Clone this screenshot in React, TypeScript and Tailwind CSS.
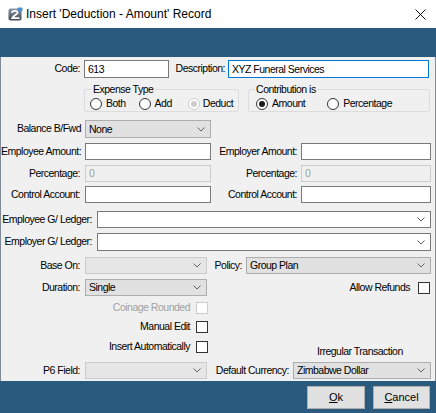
import React from "react"

const font = { fontFamily: '"Liberation Sans", Arial, sans-serif' }

function Chevron() {
  return (
    <svg width="8" height="5" viewBox="0 0 8 5" className="shrink-0">
      <polyline points="0.5,0.5 4,4 7.5,0.5" fill="none" stroke="#606060" strokeWidth="1" />
    </svg>
  )
}

function TextBox({ w, value = "", disabled = false, focused = false }: { w: string; value?: string; disabled?: boolean; focused?: boolean }) {
  const cls = disabled
    ? "bg-[#f0f0f0] border-[#cccccc] text-[#a0a0a0]"
    : focused
      ? "bg-white border-[#0078d7] text-black"
      : "bg-white border-[#7a7a7a] text-black"
  return <div className={`${w} h-full border ${cls} flex items-center pl-[3px] leading-none whitespace-nowrap`}>{value}</div>
}

function Combo({ w, value = "", kind = "list" }: { w: string; value?: string; kind?: "list" | "edit" | "disabled" }) {
  const cls =
    kind === "edit"
      ? "bg-white border-[#7a7a7a]"
      : kind === "disabled"
        ? "bg-[#e6e6e6] border-[#cccccc]"
        : "bg-[#e1e1e1] border-[#adadad]"
  return (
    <div className={`${w} h-full border ${cls} flex items-center justify-between pl-[3px] pr-[5px] leading-none text-black whitespace-nowrap`}>
      <span>{value}</span>
      <Chevron />
    </div>
  )
}

function Radio({ label, checked = false, disabled = false, gap = "ml-[4px]" }: { label: string; checked?: boolean; disabled?: boolean; gap?: string }) {
  const ring = disabled ? "border-[#cccccc]" : "border-[#333333]"
  const dot = disabled ? "bg-[#cccccc]" : "bg-[#1a1a1a]"
  return (
    <div className="flex items-center">
      <div className={`w-[12px] h-[12px] rounded-full border ${ring} bg-white flex items-center justify-center`}>
        {checked && <div className={`w-[6px] h-[6px] rounded-full ${dot}`} />}
      </div>
      <span className={`${gap} whitespace-nowrap`}>{label}</span>
    </div>
  )
}

function Check({ disabled = false }: { disabled?: boolean }) {
  return <div className={`w-[12px] h-[12px] border bg-white ${disabled ? "border-[#cccccc]" : "border-[#333333]"}`} />
}

function AppIcon() {
  return (
    <svg width="15" height="15" viewBox="0 0 15 15">
      <defs>
        <linearGradient id="ig" x1="0" y1="0" x2="0" y2="1">
          <stop offset="0" stopColor="#8a96a3" />
          <stop offset="1" stopColor="#3e4a57" />
        </linearGradient>
      </defs>
      <rect x="0.5" y="1.5" width="13" height="12" rx="2" fill="url(#ig)" />
      <path d="M4 5.2 C4.5 3.4 9.8 3.2 9.6 5.6 C9.4 7.6 5 8.4 4.2 11.2 L10.8 11.2" fill="none" stroke="#ffffff" strokeWidth="1.8" strokeLinecap="round" />
      <rect x="9.5" y="0.5" width="5" height="4" rx="1" fill="#4c8fd1" />
    </svg>
  )
}

function Label({ w, children, muted = false }: { w: string; children: React.ReactNode; muted?: boolean }) {
  return <div className={`${w} shrink-0 text-right whitespace-nowrap ${muted ? "text-[#a0a0a0]" : ""}`}>{children}</div>
}

export default function App() {
  return (
    <div
      className="w-[436px] h-[413px] overflow-hidden flex flex-col text-[10.5px] tracking-[-0.5px] text-black bg-[#f0f0f0]"
      style={font}
    >
      {/* Title bar */}
      <div className="h-[28px] bg-white flex items-center shrink-0 tracking-normal">
        <div className="ml-[8px] mt-[1px]">
          <AppIcon />
        </div>
        <span className="ml-[3px] text-[12px] text-black">Insert 'Deduction - Amount' Record</span>
        <svg width="11" height="11" viewBox="0 0 11 11" className="ml-auto mr-[10px]">
          <path d="M0.5 0.5 L10.5 10.5 M10.5 0.5 L0.5 10.5" stroke="#111" strokeWidth="1" />
        </svg>
      </div>

      {/* Top band */}
      <div className="h-[29px] bg-[#2a5a7e] shrink-0" />

      {/* Form */}
      <div className="h-[324px] shrink-0 border-x border-[#7f8a94] bg-[#f0f0f0] flex flex-col">
        {/* Code / Description */}
        <div className="flex items-center h-[18px] mt-[3px]">
          <Label w="w-[79px]">Code:</Label>
          <div className="ml-[4px] h-full flex">
            <TextBox w="w-[85px]" value="613" />
          </div>
          <Label w="w-[56px]">Description:</Label>
          <div className="ml-[3px] h-full flex">
            <TextBox w="w-[201px]" value="XYZ Funeral Services" focused />
          </div>
        </div>

        {/* Group boxes */}
        <div className="flex mt-[6px] h-[28px]">
          <fieldset className="ml-[83px] w-[155px] h-[28px] border border-[#dcdcdc] rounded-[2px] px-[5px]">
            <legend className="px-[2px] leading-[11px] ml-[1px]">Expense Type</legend>
            <div className="flex items-center mt-[1px]">
              <Radio label="Both" />
              <div className="ml-[13px]">
                <Radio label="Add" />
              </div>
              <div className="ml-[16px]">
                <Radio label="Deduct" checked disabled gap="ml-[3px]" />
              </div>
            </div>
          </fieldset>
          <fieldset className="ml-[9px] w-[182px] h-[28px] border border-[#dcdcdc] rounded-[2px] px-[7px]">
            <legend className="px-[1px] leading-[11px] ml-[-1px]">Contribution is</legend>
            <div className="flex items-center mt-[1px]">
              <Radio label="Amount" checked />
              <div className="ml-[22px]">
                <Radio label="Percentage" />
              </div>
            </div>
          </fieldset>
        </div>

        {/* Balance */}
        <div className="flex items-center h-[18px] mt-[8px]">
          <Label w="w-[80px]">Balance B/Fwd</Label>
          <div className="ml-[4px] h-full flex">
            <Combo w="w-[126px]" value="None" />
          </div>
        </div>

        {/* Amounts */}
        <div className="flex items-center h-[17px] mt-[5px]">
          <Label w="w-[79px]">Employee Amount:</Label>
          <div className="ml-[5px] h-full flex">
            <TextBox w="w-[126px]" />
          </div>
          <Label w="w-[86px]">Employer Amount:</Label>
          <div className="ml-[4px] h-full flex">
            <TextBox w="w-[130px]" />
          </div>
        </div>

        <div className="flex items-center h-[17px] mt-[5px]">
          <Label w="w-[79px]">Percentage:</Label>
          <div className="ml-[5px] h-full flex">
            <TextBox w="w-[126px]" value="0" disabled />
          </div>
          <Label w="w-[86px]">Percentage:</Label>
          <div className="ml-[4px] h-full flex">
            <TextBox w="w-[130px]" value="0" disabled />
          </div>
        </div>

        <div className="flex items-center h-[17px] mt-[4px]">
          <Label w="w-[79px]">Control Account:</Label>
          <div className="ml-[5px] h-full flex">
            <TextBox w="w-[126px]" />
          </div>
          <Label w="w-[86px]">Control Account:</Label>
          <div className="ml-[4px] h-full flex">
            <TextBox w="w-[130px]" />
          </div>
        </div>

        {/* Ledgers */}
        <div className="flex items-center h-[17px] mt-[8px]">
          <Label w="w-[91px]">Employee G/ Ledger:</Label>
          <div className="ml-[5px] h-full flex">
            <Combo w="w-[334px]" kind="edit" />
          </div>
        </div>
        <div className="flex items-center h-[18px] mt-[5px]">
          <Label w="w-[91px]">Employer G/ Ledger:</Label>
          <div className="ml-[5px] h-full flex">
            <Combo w="w-[334px]" kind="edit" />
          </div>
        </div>

        {/* Base on / Policy */}
        <div className="flex items-center h-[17px] mt-[6px]">
          <Label w="w-[79px]">Base On:</Label>
          <div className="ml-[5px] h-full flex">
            <Combo w="w-[122px]" kind="disabled" />
          </div>
          <Label w="w-[35px]">Policy:</Label>
          <div className="ml-[4px] h-full flex">
            <Combo w="w-[185px]" value="Group Plan" />
          </div>
        </div>

        {/* Duration / Allow refunds */}
        <div className="flex items-center h-[17px] mt-[5px]">
          <Label w="w-[79px]">Duration:</Label>
          <div className="ml-[5px] h-full flex">
            <Combo w="w-[122px]" value="Single" />
          </div>
          <div className="ml-auto mr-[5px] flex items-center">
            <span className="whitespace-nowrap">Allow Refunds</span>
            <div className="ml-[8px]">
              <Check />
            </div>
          </div>
        </div>

        {/* Check rows */}
        <div className="flex items-center h-[12px] mt-[6px]">
          <Label w="w-[189px]" muted>
            Coinage Rounded
          </Label>
          <div className="ml-[6px]">
            <Check disabled />
          </div>
        </div>
        <div className="flex items-center h-[12px] mt-[7px]">
          <Label w="w-[189px]">Manual Edit</Label>
          <div className="ml-[6px]">
            <Check />
          </div>
        </div>
        <div className="flex items-center h-[12px] mt-[8px]">
          <Label w="w-[189px]">Insert Automatically</Label>
          <div className="ml-[6px]">
            <Check />
          </div>
          <div className="ml-[109px] mt-[9px] whitespace-nowrap">Irregular Transaction</div>
        </div>

        {/* P6 / Currency */}
        <div className="flex items-center h-[17px] mt-[9px]">
          <Label w="w-[79px]">P6 Field:</Label>
          <div className="ml-[5px] h-full flex">
            <Combo w="w-[122px]" kind="disabled" />
          </div>
          <Label w="w-[82px]">Default Currency:</Label>
          <div className="ml-[4px] h-full flex">
            <Combo w="w-[138px]" value="Zimbabwe Dollar" />
          </div>
        </div>
      </div>

      {/* Footer */}
      <div className="flex-1 bg-[#2a5a7e] flex items-start justify-end pt-[5px] pr-[6px]">
        <button className="w-[58px] h-[23px] bg-[#e1e1e1] border border-[#adadad] text-black text-[11px] leading-none tracking-normal">
          <span className="underline underline-offset-1">O</span>k
        </button>
        <button className="ml-[8px] w-[57px] h-[23px] bg-[#e1e1e1] border border-[#adadad] text-black text-[11px] leading-none tracking-normal">
          <span className="underline underline-offset-1">C</span>ancel
        </button>
      </div>
    </div>
  )
}
